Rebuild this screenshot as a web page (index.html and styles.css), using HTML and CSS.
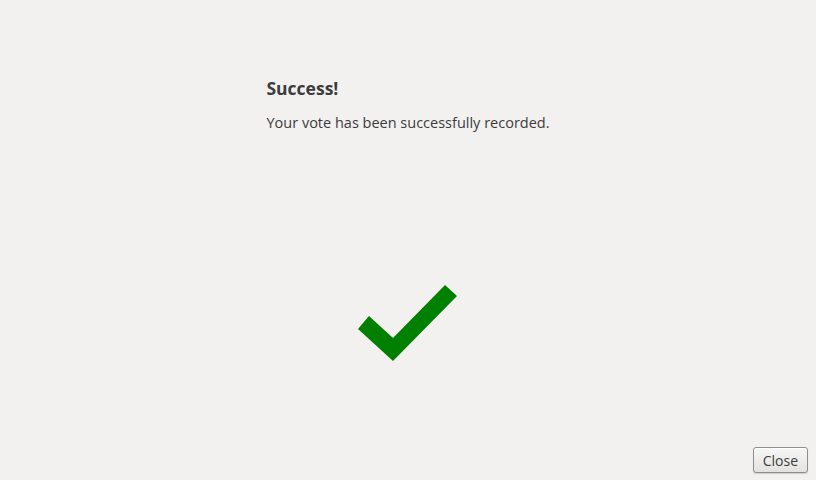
FILE: index.html
```html
<!DOCTYPE html>
<html>
<head>
<meta charset="utf-8">
<link rel="stylesheet" href="styles.css">
</head>
<body>
<div class="page">
  <div class="message">
    <h1 class="title">Success!</h1>
    <p class="text">Your vote has been successfully recorded.</p>
  </div>
  <svg class="check" width="100" height="78" viewBox="358 284 100 78">
    <polygon points="358,329 369,316 393,338 445,285 457,296 393,361" fill="#008000"/>
  </svg>
  <div class="footer">
    <button class="btn">Close</button>
  </div>
</div>
</body>
</html>
```

FILE: styles.css
```css
html, body {
  margin: 0;
  padding: 0;
  background: #f2f1f0;
}
.page {
  width: 816px;
  height: 480px;
  display: flex;
  flex-direction: column;
  align-items: center;
  font-family: "Open Sans", "DejaVu Sans", sans-serif;
  color: #3c3c3c;
}
.message {
  padding-top: 76px;
}
.title {
  margin: 0;
  font-size: 17.5px;
  font-weight: bold;
  line-height: 24px;
}
.text {
  margin: 13px 0 0;
  font-size: 14.5px;
  line-height: 20px;
}
.check {
  display: block;
  margin-top: 151px;
}
.footer {
  margin-top: auto;
  align-self: stretch;
  display: flex;
  justify-content: flex-end;
  padding: 0 8px 7px 0;
}
.btn {
  font-family: "Open Sans", "DejaVu Sans", sans-serif;
  font-size: 14px;
  color: #3c3c3c;
  height: 26px;
  padding: 0 9px;
  border: 1px solid #8e8e8e;
  border-radius: 3px;
  background: linear-gradient(#f7f7f6, #e3e2e0);
  box-shadow: inset 0 1px 0 #ffffff, 0 1px 1px rgba(0,0,0,0.15);
}
```
